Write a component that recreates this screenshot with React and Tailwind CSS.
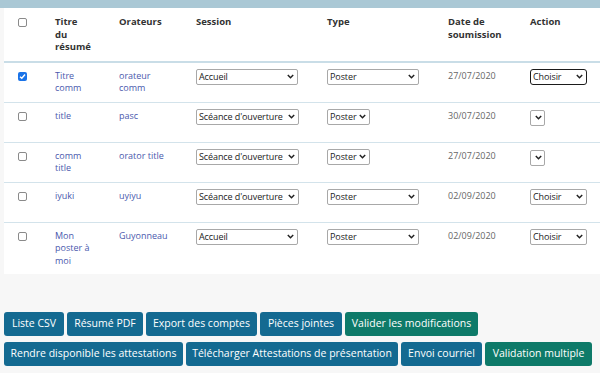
import React from "react";

const font = { fontFamily: '"Open Sans", "DejaVu Sans", sans-serif' };

function Chevron() {
  return (
    <svg width="7" height="5" viewBox="0 0 7 5" className="shrink-0 ml-[2px]">
      <path d="M0.8 1 L3.5 3.7 L6.2 1" fill="none" stroke="#222" strokeWidth="1.5" />
    </svg>
  );
}

function Sel({ label, className }) {
  return (
    <div
      className={`inline-flex items-center justify-between h-[16px] rounded-[2px] bg-white pl-[2px] pr-[3px] text-[9px] leading-none text-[#222] ${className}`}
    >
      <span className="whitespace-nowrap tracking-[-0.1px]">{label}</span>
      <Chevron />
    </div>
  );
}

function Check({ checked }) {
  if (checked) {
    return (
      <div className="w-[9px] h-[9px] rounded-[2px] bg-[#1a73e8] flex items-center justify-center">
        <svg width="7" height="7" viewBox="0 0 7 7">
          <path d="M1 3.7 L2.8 5.3 L6 1.5" fill="none" stroke="#fff" strokeWidth="1.4" />
        </svg>
      </div>
    );
  }
  return <div className="w-[9px] h-[9px] rounded-[2px] border border-[#8a8a8a] bg-white" />;
}

const rows = [
  {
    checked: true,
    title: ["Titre", "comm"],
    orator: ["orateur", "comm"],
    session: { label: "Accueil", w: "w-[102px]" },
    type: { label: "Poster", w: "w-[92px]" },
    date: "27/07/2020",
    action: { label: "Choisir", w: "w-[57px]", focus: true },
  },
  {
    title: ["title"],
    orator: ["pasc"],
    session: { label: "Scéance d'ouverture", w: "w-[103px]" },
    type: { label: "Poster", w: "w-[43px]" },
    date: "30/07/2020",
    action: { label: "", w: "w-[15px]" },
  },
  {
    title: ["comm", "title"],
    orator: ["orator title"],
    session: { label: "Scéance d'ouverture", w: "w-[103px]" },
    type: { label: "Poster", w: "w-[43px]" },
    date: "27/07/2020",
    action: { label: "", w: "w-[15px]" },
  },
  {
    title: ["iyuki"],
    orator: ["uyiyu"],
    session: { label: "Scéance d'ouverture", w: "w-[103px]" },
    type: { label: "Poster", w: "w-[92px]" },
    date: "02/09/2020",
    action: { label: "Choisir", w: "w-[57px]" },
  },
  {
    title: ["Mon", "poster à", "moi"],
    orator: ["Guyonneau"],
    session: { label: "Accueil", w: "w-[102px]" },
    type: { label: "Poster", w: "w-[92px]" },
    date: "02/09/2020",
    action: { label: "Choisir", w: "w-[57px]" },
    last: true,
  },
];

function Btn({ children, w, green }) {
  return (
    <div
      className={`h-[24px] ${w} rounded-[3px] flex items-center justify-center text-white text-[10.5px] whitespace-nowrap ${
        green ? "bg-[#0e7a69]" : "bg-[#146a91]"
      }`}
    >
      {children}
    </div>
  );
}

export default function App() {
  const td = "align-top pl-[8px] pt-[7px] pb-[7px]";
  const th = "align-top text-left pl-[8px] pt-[8px] pb-[7px] font-bold text-[9.5px] leading-[12.5px] text-[#333]";
  return (
    <div className="w-[600px] h-[373px] bg-[#f7f7f7] overflow-hidden" style={font}>
      <div className="h-[8px] bg-[#aac8d5]" />
      <div className="pl-[4px]">
        <table className="table-fixed w-[596px] bg-white">
          <colgroup>
            <col className="w-[43px]" />
            <col className="w-[64px]" />
            <col className="w-[77px]" />
            <col className="w-[131px]" />
            <col className="w-[121px]" />
            <col className="w-[82px]" />
            <col className="w-[78px]" />
          </colgroup>
          <thead>
            <tr className="border-b-2 border-[#c9dde7]">
              <th className="align-top pl-[14px] pt-[10px]">
                <Check />
              </th>
              <th className={th}>
                Titre
                <br />
                du
                <br />
                résumé
              </th>
              <th className={th}>Orateurs</th>
              <th className={th}>Session</th>
              <th className={th}>Type</th>
              <th className={th}>
                Date de
                <br />
                soumission
              </th>
              <th className={th}>Action</th>
            </tr>
          </thead>
          <tbody className="text-[9px] leading-[12.5px]">
            {rows.map((r, i) => (
              <tr key={i} className={r.last ? "h-[52px]" : "h-[40px] border-b border-[#d3e3eb]"}>
                <td className="align-top pl-[14px] pt-[9px]">
                  <Check checked={r.checked} />
                </td>
                <td className={`${td} text-[#4a59ad]`}>
                  {r.title.map((t, j) => (
                    <div key={j}>{t}</div>
                  ))}
                </td>
                <td className={`${td} text-[#4a59ad]`}>
                  {r.orator.map((t, j) => (
                    <div key={j}>{t}</div>
                  ))}
                </td>
                <td className="align-top pl-[8px] pt-[6px]">
                  <Sel label={r.session.label} className={`${r.session.w} border border-[#a8a8a8]`} />
                </td>
                <td className="align-top pl-[8px] pt-[6px]">
                  <Sel label={r.type.label} className={`${r.type.w} border border-[#a8a8a8]`} />
                </td>
                <td className={`${td} text-[#666]`}>{r.date}</td>
                <td className="align-top pl-[8px] pt-[6px]">
                  <Sel
                    label={r.action.label}
                    className={`${r.action.w} ${
                      r.action.focus ? "border-[1.5px] border-[#1b1b1b] rounded-[3px]" : "border border-[#a8a8a8]"
                    }`}
                  />
                </td>
              </tr>
            ))}
          </tbody>
        </table>
      </div>
      <div className="pl-[4px] pt-[38px] flex flex-col gap-[6px]">
        <div className="flex gap-[3px]">
          <Btn w="w-[60px]">Liste CSV</Btn>
          <Btn w="w-[76px]">Résumé PDF</Btn>
          <Btn w="w-[111px]">Export des comptes</Btn>
          <Btn w="w-[82px]">Pièces jointes</Btn>
          <Btn w="w-[133px]" green>
            Valider les modifications
          </Btn>
        </div>
        <div className="flex gap-[3px]">
          <Btn w="w-[179px]">Rendre disponible les attestations</Btn>
          <Btn w="w-[212px]">Télécharger Attestations de présentation</Btn>
          <Btn w="w-[81px]">Envoi courriel</Btn>
          <Btn w="w-[107px]" green>
            Validation multiple
          </Btn>
        </div>
      </div>
    </div>
  );
}
